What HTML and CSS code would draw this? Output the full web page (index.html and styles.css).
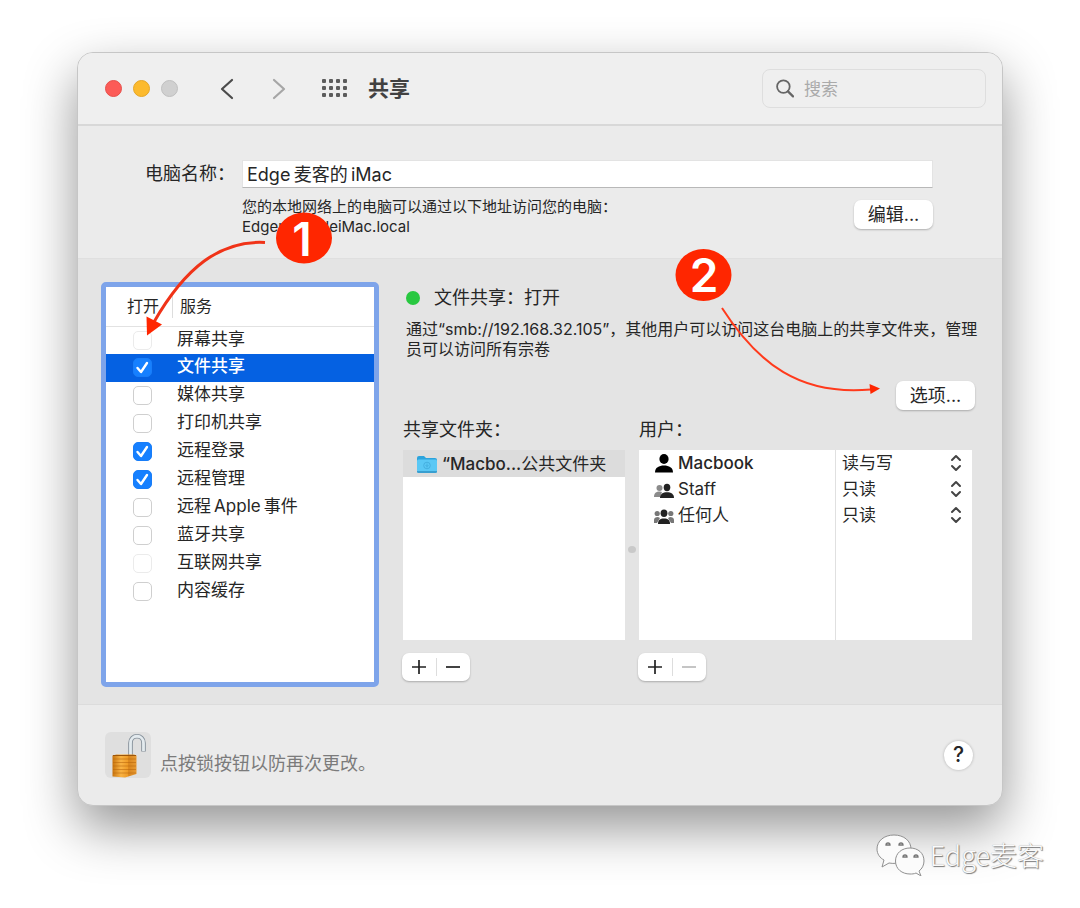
FILE: index.html
```html
<!DOCTYPE html>
<html lang="zh-CN">
<head>
<meta charset="utf-8">
<title>共享</title>
<link rel="stylesheet" href="styles.css">
</head>
<body>
<div class="window">
  <header class="toolbar">
    <div class="lights">
      <button class="light close" aria-label="关闭"></button>
      <button class="light minimize" aria-label="最小化"></button>
      <button class="light disabled" aria-label="缩放" disabled></button>
    </div>
    <nav class="nav">
      <button class="plain" aria-label="后退"><svg width="14" height="22" viewBox="0 0 14 22"><path d="M12 2L2 11l10 9" fill="none" stroke="#4b4b4b" stroke-width="2.2" stroke-linecap="round" stroke-linejoin="round"/></svg></button>
      <button class="plain" aria-label="前进"><svg width="14" height="22" viewBox="0 0 14 22"><path d="M2 2l10 9-10 9" fill="none" stroke="#a6a6a6" stroke-width="2.2" stroke-linecap="round" stroke-linejoin="round"/></svg></button>
    </nav>
    <button class="plain" aria-label="显示全部"><svg width="26" height="19" viewBox="0 0 26 19" fill="#5c5c5c"><rect x="0" y="0" width="4" height="4" rx="1"/><rect x="7" y="0" width="4" height="4" rx="1"/><rect x="14" y="0" width="4" height="4" rx="1"/><rect x="21" y="0" width="4" height="4" rx="1"/><rect x="0" y="7" width="4" height="4" rx="1"/><rect x="7" y="7" width="4" height="4" rx="1"/><rect x="14" y="7" width="4" height="4" rx="1"/><rect x="21" y="7" width="4" height="4" rx="1"/><rect x="0" y="14" width="4" height="4" rx="1"/><rect x="7" y="14" width="4" height="4" rx="1"/><rect x="14" y="14" width="4" height="4" rx="1"/><rect x="21" y="14" width="4" height="4" rx="1"/></svg></button>
    <h1 class="title">共享</h1>
    <label class="search">
      <svg width="18" height="19" viewBox="0 0 18 19" fill="none" stroke="#666" stroke-width="1.8" stroke-linecap="round"><circle cx="7.4" cy="7.6" r="6.3"/><path d="M12 12.4l5 5" stroke-width="2.2"/></svg>
      <input type="search" placeholder="搜索" aria-label="搜索">
    </label>
  </header>

  <section class="identity">
    <label for="name" class="name-label">电脑名称：</label>
    <input id="name" class="name" type="text" value="Edge&#8201;麦客的&#8201;iMac">
    <div class="address">
      <p>您的本地网络上的电脑可以通过以下地址访问您的电脑：<br>EdgemaikedeiMac.local</p>
      <button class="push">编辑...</button>
    </div>
  </section>

  <main class="main">
    <div class="services">
      <table class="service-table">
        <thead><tr><th scope="col" class="on">打开</th><th scope="col"><span class="service-head">服务</span></th></tr></thead>
        <tbody>
          <tr><td class="on"><input type="checkbox" id="s1" disabled></td><td><label for="s1">屏幕共享</label></td></tr>
          <tr class="selected"><td class="on"><input type="checkbox" id="s2" checked></td><td><label for="s2">文件共享</label></td></tr>
          <tr><td class="on"><input type="checkbox" id="s3"></td><td><label for="s3">媒体共享</label></td></tr>
          <tr><td class="on"><input type="checkbox" id="s4"></td><td><label for="s4">打印机共享</label></td></tr>
          <tr><td class="on"><input type="checkbox" id="s5" checked></td><td><label for="s5">远程登录</label></td></tr>
          <tr><td class="on"><input type="checkbox" id="s6" checked></td><td><label for="s6">远程管理</label></td></tr>
          <tr><td class="on"><input type="checkbox" id="s7"></td><td><label for="s7">远程&#8201;Apple&#8201;事件</label></td></tr>
          <tr><td class="on"><input type="checkbox" id="s8"></td><td><label for="s8">蓝牙共享</label></td></tr>
          <tr><td class="on"><input type="checkbox" id="s9" disabled></td><td><label for="s9">互联网共享</label></td></tr>
          <tr><td class="on"><input type="checkbox" id="s10"></td><td><label for="s10">内容缓存</label></td></tr>
        </tbody>
      </table>
    </div>

    <div class="detail">
      <h2 class="status"><span class="dot"></span>文件共享：打开</h2>
      <p class="description">通过“smb://192.168.32.105”，其他用户可以访问这台电脑上的共享文件夹，管理<br>员可以访问所有宗卷</p>
      <button class="push options">选项...</button>

      <div class="columns">
        <section class="column">
          <h3>共享文件夹：</h3>
          <ul class="list">
            <li class="folder">
              <svg width="20" height="18" viewBox="0 0 20 18"><path d="M0 3a2 2 0 012-2h5l2 2h9a2 2 0 012 2v3H0z" fill="#2ba3dc"/><rect y="4.5" width="20" height="13" rx="1.5" fill="#5ac8f5"/><path d="M0 16h20v.5a1.500 1.500 0 01-1.500 1.500h-17A1.500 1.500 0 010 16.500z" fill="#399fd0"/><circle cx="10" cy="10.500" r="3.300" fill="none" stroke="#45b0e0"/><path d="M10 8.500v4M8.500 10l1.500 1.500 1.500-1.500" fill="none" stroke="#45b0e0"/></svg>
              <span><b>“Macbo...</b>公共文件夹</span>
            </li>
          </ul>
          <div class="pair"><button aria-label="添加文件夹"><svg width="16" height="16" viewBox="0 0 16 16"><path d="M8 1v14M1 8h14" stroke="#222" stroke-width="1.700"/></svg></button><button aria-label="移除文件夹"><svg width="16" height="16" viewBox="0 0 16 16"><path d="M1 8h14" stroke="#222" stroke-width="1.700"/></svg></button></div>
        </section>
        <span class="grip"></span>
        <section class="column">
          <h3>用户：</h3>
          <div class="list users">
            <table class="user-table">
              <tr>
                <td><span class="user"><svg width="20" height="19" viewBox="0 0 20 19" fill="#000"><ellipse cx="10" cy="5" rx="4.600" ry="5"/><path d="M1 18.500c0-5 4-7 9-7s9 2 9 7z"/></svg><b>Macbook</b></span></td>
                <td><span class="perm"><select aria-label="Macbook 权限"><option>读与写</option><option>只读</option></select><svg width="12" height="18" viewBox="0 0 12 18"><path d="M2 6l4-4 4 4M2 12l4 4 4-4" fill="none" stroke="#444" stroke-width="2" stroke-linecap="round" stroke-linejoin="round"/></svg></span></td>
              </tr>
              <tr>
                <td><span class="user"><svg width="20" height="19" viewBox="0 0 20 19"><g fill="#8b8b8b"><circle cx="5.500" cy="8" r="3"/><path d="M0 17c0-4 2-5.500 6-5.500l2 .5-2 5z"/></g><g fill="#222"><ellipse cx="13" cy="7.500" rx="3.300" ry="3.700"/><path d="M6 18c0-4 3-5.700 7-5.700s7 1.700 7 5.700z"/></g></svg>Staff</span></td>
                <td><span class="perm"><select aria-label="Staff 权限"><option>只读</option><option>读与写</option></select><svg width="12" height="18" viewBox="0 0 12 18"><path d="M2 6l4-4 4 4M2 12l4 4 4-4" fill="none" stroke="#444" stroke-width="2" stroke-linecap="round" stroke-linejoin="round"/></svg></span></td>
              </tr>
              <tr>
                <td><span class="user"><svg width="20" height="19" viewBox="0 0 20 19"><g fill="#777"><circle cx="3.200" cy="7.500" r="2.600"/><circle cx="16.800" cy="7.500" r="2.600"/><path d="M0 17v-3c0-2 1.500-3 4-3l2 1-3 5zM20 17v-3c0-2-1.500-3-4-3l-2 1 3 5z"/></g><g fill="#222"><ellipse cx="10" cy="7.200" rx="3.400" ry="3.700"/><path d="M4 18c0-4 2-5.500 6-5.500s6 1.500 6 5.500z"/></g></svg>任何人</span></td>
                <td><span class="perm"><select aria-label="任何人 权限"><option>只读</option><option>读与写</option></select><svg width="12" height="18" viewBox="0 0 12 18"><path d="M2 6l4-4 4 4M2 12l4 4 4-4" fill="none" stroke="#444" stroke-width="2" stroke-linecap="round" stroke-linejoin="round"/></svg></span></td>
              </tr>
              <tr class="rest"><td></td><td></td></tr>
            </table>
          </div>
          <div class="pair"><button aria-label="添加用户"><svg width="16" height="16" viewBox="0 0 16 16"><path d="M8 1v14M1 8h14" stroke="#222" stroke-width="1.700"/></svg></button><button aria-label="移除用户" disabled><svg width="16" height="16" viewBox="0 0 16 16"><path d="M1 8h14" stroke="#bbb" stroke-width="1.700"/></svg></button></div>
        </section>
      </div>
    </div>
  </main>

  <footer class="footer">
    <button class="lock" aria-label="锁定"><svg width="46" height="46" viewBox="0 0 46 46">
      <defs><linearGradient id="brass"><stop offset="0" stop-color="#c8740e"/><stop offset=".35" stop-color="#f9b344"/><stop offset=".65" stop-color="#ee9a25"/><stop offset=".67" stop-color="#d9861e"/><stop offset="1" stop-color="#e89a33"/></linearGradient></defs>
      <path d="M25.500 23V11c0-9 13-9 13 0v8.500" fill="none" stroke="#85909a" stroke-width="4.600"/>
      <path d="M25.500 23V11c0-9 13-9 13 0v8" fill="none" stroke="#e3eaee" stroke-width="2.800"/>
      <path d="M7.500 23.500l4-1H29l2.500 1v18.500L20 45.500 7.500 44.500z" fill="url(#brass)"/>
      <path d="M8 27h23M8 30.500h23M8 34h23M8 37.500h23M8 41h23" stroke="#b8660c" stroke-width="1" opacity=".55"/>
      <path d="M8 23.500h23" stroke="#9c560b"/>
    </svg></button>
    <p class="lock-text">点按锁按钮以防再次更改。</p>
    <button class="help" aria-label="帮助">?</button>
  </footer>

  <svg class="marks" width="926" height="754" viewBox="77 52 926 754" aria-hidden="true">
    <path d="M265 242.500C220 240 185 268 154 322" fill="none" stroke="#f03318" stroke-width="3"/>
    <path d="M147 335.500l-.5-19 15.500 8z" fill="#ff2600"/>
    <ellipse cx="304" cy="238" rx="28" ry="25.500" fill="#ff2600"/>
    <text x="302" y="256" class="digit">1</text>
    <path d="M722 308C758 364 800 396 871 389.500" fill="none" stroke="#ff3a1c" stroke-width="2"/>
    <path d="M880 388.500l-10.500-4.500 1 10z" fill="#ff2600"/>
    <ellipse cx="703.500" cy="275" rx="28" ry="26" fill="#ff2600"/>
    <text x="704" y="292" class="digit">2</text>
  </svg>
</div>

<div class="watermark">
  <svg width="50" height="42" viewBox="0 0 50 42" fill="#fbfbfb" stroke="#909090" stroke-width="1">
    <path d="M18 1C8 1 1 7 1 15c0 5 3 9 7 11l-2 7 7-4c10 2 22-3 22-14C35 7 28 1 18 1z"/>
    <path d="M34 14c-8 0-14.500 5-14.500 13S26 40 34 40c2 0 4 0 6-1l5 3-2-5c3-2 5-6 5-10 0-8-6-13-14-13z"/>
    <g fill="none" stroke="#777" stroke-width="1.300"><path d="M10 11a2 2 0 014 0zM23 11a2 2 0 014 0zM27 23a2 2 0 014 0zM38 23a2 2 0 014 0z"/></g>
  </svg>
  <span>Edge麦客</span>
</div>
</body>
</html>
```
FILE: styles.css
```css
* { box-sizing: border-box; }

body {
  margin: 0;
  padding: 52px 77px 102px;
  position: relative;
  overflow-x: hidden;
  background: #fff;
  color: #262626;
  font: 18px/24px Inter, "Noto Sans CJK SC", sans-serif;
}

button, input, select { font: inherit; color: inherit; margin: 0; }
button { border: 0; padding: 0; }
h1, h2, h3, p, ul { margin: 0; padding: 0; font-weight: 400; font-size: inherit; }
b { font-weight: 500; }
svg { display: block; flex: none; }

.window {
  position: relative;
  border: 1px solid #c6c6c6;
  border-radius: 16px;
  background: #ebebeb;
  box-shadow: 0 22px 52px rgba(0, 0, 0, .42);
}

.toolbar {
  display: flex;
  align-items: center;
  height: 73px;
  padding: 0 16px 0 27px;
  background: #efefef;
  border-bottom: 2px solid #d8d8d8;
  border-radius: 15px 15px 0 0;
}
.lights { display: flex; gap: 11px; margin-right: 42px; }
.light { width: 17px; height: 17px; border-radius: 50%; }
.close { background: #fc5b57; border: 1px solid #e6504b; }
.minimize { background: #fcba2d; border: 1px solid #e5a627; }
.disabled { background: #d0d0d0; border: 1px solid #c0c0c0; }
.plain { background: none; }
.nav { display: flex; gap: 38px; margin-right: 36px; }
.title { margin-left: 20px; font-size: 21px; font-weight: 700; color: #414141; }
.search {
  display: flex;
  align-items: center;
  gap: 10px;
  width: 224px;
  height: 39px;
  margin-left: auto;
  padding: 0 13px;
  border: 1px solid #dedede;
  border-radius: 8px;
}
.search input { flex: 1; min-width: 0; border: 0; padding: 0; background: none; outline: 0; font-size: 17px; }
.search input::placeholder { color: #aaa; }

.identity {
  display: grid;
  grid-template-columns: auto 1fr;
  column-gap: 7px;
  row-gap: 9px;
  padding: 34px 69px 21px 67px;
}
.name-label { line-height: 28px; }
.name {
  width: 100%;
  height: 28px;
  padding: 0 4px 2px;
  border: 1px solid #e3e3e3;
  border-bottom-color: #b8b8b8;
  border-radius: 0;
  background: #fff;
  outline: 0;
}
.address { grid-column: 2; display: flex; justify-content: space-between; font-size: 15px; line-height: 20px; }
.push {
  flex: none;
  width: 79px;
  height: 29px;
  margin-top: 3px;
  border-radius: 7px;
  background: #fff;
  box-shadow: 0 1px 2px rgba(0, 0, 0, .25);
  font-size: 18px;
  line-height: 28px;
}

.main {
  display: flex;
  gap: 24px;
  padding: 23px 30px 17px 23px;
  background: #e4e4e4;
  border-top: 1px solid #dfdfdf;
  border-bottom: 1px solid #dcdcdc;
}

.services { flex: 0 0 278px; border: 5px solid #7ea4ea; border-radius: 5px; background: #fff; }
.service-table { width: 100%; border-collapse: collapse; font-size: 17px; }
.service-table td { height: 28px; padding: 0; line-height: 24px; vertical-align: top; }
.service-table th { height: 39px; padding: 0; border-bottom: 1px solid #e2e2e2; font-size: 16px; font-weight: 400; text-align: left; }
.service-head { display: block; padding-left: 7px; border-left: 1px solid #ddd; }
.service-table .on { width: 66px; }
.service-table th.on { padding-left: 21px; }
.service-table td + td { padding-left: 5px; }
.service-table .selected { background: #0561e2; color: #fff; }
.selected label { font-weight: 500; }
.service-table input {
  appearance: none;
  display: block;
  width: 19px;
  height: 19px;
  margin: 4px 0 0 27px;
  border: 1px solid #cfcfcf;
  border-radius: 5px;
  background: #fff;
}
.service-table input:disabled { border-color: #ebebeb; }
.service-table input:checked {
  border-color: #187df8;
  background: #1680ff url("data:image/svg+xml,%3Csvg xmlns='http://www.w3.org/2000/svg' viewBox='0 0 19 19'%3E%3Cpath d='M4.500 10l3.500 4 6-9' fill='none' stroke='white' stroke-width='2.400' stroke-linecap='round' stroke-linejoin='round'/%3E%3C/svg%3E") center / 19px no-repeat;
}

.detail { flex: 1; min-width: 0; display: flex; flex-direction: column; padding: 4px 0 6px; }
.status { display: flex; align-items: center; gap: 14px; padding-left: 3px; }
.dot { width: 14px; height: 14px; border-radius: 50%; background: #28c840; }
.description { margin: 9px 0 0 3px; font-size: 16px; line-height: 20px; white-space: nowrap; }
.options { align-self: flex-end; margin: 22px -3px 0 0; }

.columns { flex: 1; display: grid; grid-template-columns: 2fr 8px 3fr; gap: 3px; margin-top: 8px; }
.column { display: flex; flex-direction: column; min-width: 0; }
.grip { align-self: center; width: 8px; height: 7px; border-radius: 50%; background: #c9c9c9; }
.list { flex: 1; min-height: 190px; margin: 8px 0 13px; background: #fff; list-style: none; font-size: 17px; }
.folder { display: flex; align-items: center; gap: 5px; height: 27px; padding-left: 14px; background: #dcdcdc; white-space: nowrap; }
.users { display: flex; }
.user-table { width: 100%; height: 100%; border-collapse: collapse; table-layout: fixed; }
.user-table td { height: 26px; padding: 0; }
.user-table td:first-child { width: 59%; border-right: 1px solid #e0e0e0; }
.user-table .rest td { height: auto; }
.user { display: flex; align-items: center; gap: 4px; padding-left: 15px; }
.perm { display: grid; align-items: center; padding: 0 10px 0 6px; }
.perm > * { grid-area: 1 / 1; }
.perm select { width: 100%; height: 26px; padding: 0; appearance: none; border: 0; background: none; }
.perm svg { justify-self: end; pointer-events: none; }

.pair {
  display: flex;
  align-self: flex-start;
  width: 68px;
  height: 28px;
  margin-left: -1px;
  border-radius: 7px;
  background: #fff;
  box-shadow: 0 1px 2px rgba(0, 0, 0, .25);
}
.pair button { flex: 1; display: grid; place-items: center; margin: 5px 0; background: none; }
.pair button + button { border-left: 1px solid #ddd; }

.footer { display: flex; align-items: flex-end; gap: 9px; padding: 27px 29px 27px 27px; }
.lock { width: 46px; height: 46px; border-radius: 6px; background: #dfdfdf; }
.lock-text { color: #7b7b7b; line-height: 28px; }
.help {
  align-self: center;
  width: 29px;
  height: 29px;
  margin-left: auto;
  border-radius: 50%;
  background: #fff;
  box-shadow: 0 0 3px rgba(0, 0, 0, .25);
  font-size: 21px;
  font-weight: 500;
}

.marks { position: absolute; top: -1px; left: -1px; pointer-events: none; }
.digit { font: 600 46px Inter, sans-serif; fill: #fff; text-anchor: middle; }

.watermark {
  position: absolute;
  right: 36px;
  bottom: 32px;
  display: flex;
  align-items: center;
  gap: 4px;
  color: #fafafa;
  font: 300 27px/40px "Noto Sans CJK SC", sans-serif;
  text-shadow: 1px 1px 1px #777, 0 0 1px #999;
}
```
